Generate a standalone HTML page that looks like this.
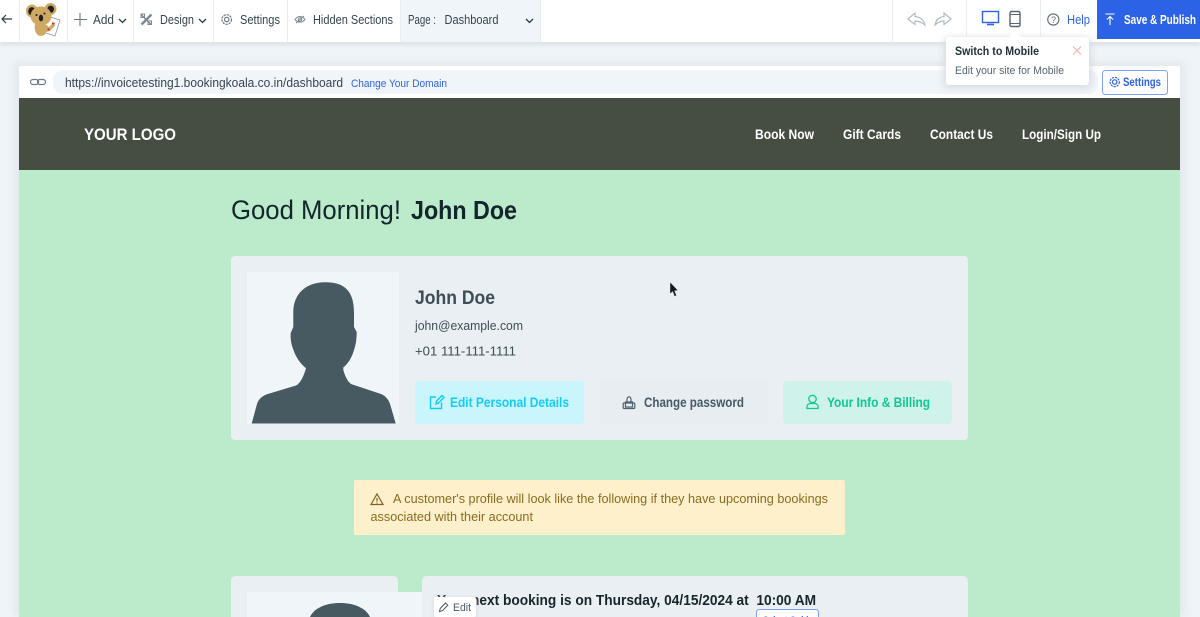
<!DOCTYPE html>
<html><head><meta charset="utf-8"><title>Editor</title>
<style>
html,body{margin:0;padding:0;width:1200px;height:617px;overflow:hidden;background:#eff4f8}
svg{display:block}
text{font-family:"Liberation Sans",sans-serif;white-space:pre}
</style></head><body>
<svg width="1200" height="617" viewBox="0 0 1200 617" xmlns="http://www.w3.org/2000/svg">
<defs>
<filter id="sh" x="-20%" y="-40%" width="140%" height="180%"><feGaussianBlur stdDeviation="4"/></filter>
<filter id="sh2" x="-20%" y="-40%" width="140%" height="200%"><feGaussianBlur stdDeviation="2"/></filter>
</defs>
<rect width="1200" height="617" fill="#eff4f8"/>
<!-- site frame -->
<rect x="14" y="62" width="1171" height="555" fill="#e3e8ec" filter="url(#sh)"/>
<rect x="19" y="66" width="1161" height="32" fill="#fff" rx="2"/>
<rect x="53" y="70" width="1045" height="24" rx="10" fill="#f0f5f9"/>
<g fill="none" stroke="#6c7a82" stroke-width="1.2"><rect x="30.5" y="79.5" width="8" height="5" rx="2.5"/><rect x="37.5" y="79.5" width="8" height="5" rx="2.5"/></g>
<text x="65" y="87" font-size="13" fill="#36454d" textLength="278" lengthAdjust="spacingAndGlyphs">https://invoicetesting1.bookingkoala.co.in/dashboard</text>
<text x="351" y="87" font-size="11" fill="#2f62e8" textLength="96" lengthAdjust="spacingAndGlyphs">Change Your Domain</text>
<rect x="1102.5" y="70.5" width="65" height="24" rx="3" fill="#fff" stroke="#7fa3f2"/>
<g fill="none" stroke="#2f62e8" stroke-width="1.2"><circle cx="1114.7" cy="82" r="2.2"/><circle cx="1114.7" cy="82" r="4.6" stroke-dasharray="2.2 .9"/></g>
<text x="1123" y="86" font-size="11.5" font-weight="700" fill="#2f62e8" textLength="38" lengthAdjust="spacingAndGlyphs">Settings</text>
<!-- header -->
<rect x="19" y="98" width="1161" height="72" fill="#464e41"/>
<text x="84" y="140" font-size="17" font-weight="700" fill="#fff" textLength="92" lengthAdjust="spacingAndGlyphs">YOUR LOGO</text>
<g font-size="13.5" font-weight="700" fill="#fff">
<text x="755" y="139" textLength="59" lengthAdjust="spacingAndGlyphs">Book Now</text>
<text x="843" y="139" textLength="58" lengthAdjust="spacingAndGlyphs">Gift Cards</text>
<text x="930" y="139" textLength="63" lengthAdjust="spacingAndGlyphs">Contact Us</text>
<text x="1022" y="139" textLength="79" lengthAdjust="spacingAndGlyphs">Login/Sign Up</text>
</g>
<!-- page -->
<rect x="19" y="170" width="1161" height="447" fill="#bbebca"/>
<text x="231" y="219" font-size="27" fill="#12262c" textLength="170" lengthAdjust="spacingAndGlyphs">Good Morning!</text>
<text x="411" y="219" font-size="26" font-weight="700" fill="#12262c" textLength="106" lengthAdjust="spacingAndGlyphs">John Doe</text>
<!-- profile card -->
<rect x="231" y="256" width="737" height="184" rx="4" fill="#e9eff3"/>
<rect x="247" y="272" width="152" height="152" fill="#f0f5f9"/>
<path d="M325 282.3C339 282.3 345 286.500 349 292C353 298 354 305 354 315L354 327L356.700 332C356.700 340 355.500 346 354 350C352 357 348 364 343.300 367.500L343.300 370C345 376 348 382.500 351.700 384.300L381 394C386 396 389 400 390.500 405.500L395.700 423.500L251.700 423.500L257 404C258.500 399.500 262 396 267 394.300L296 385.500C301 383 304 375 306 368.300C301 364 296 358 293.500 350C291.500 345 290.300 340 290.700 333L293.300 327L293.300 312C293.300 295 305 282.300 325 282.300Z" fill="#475961"/>
<text x="415" y="304" font-size="19" font-weight="700" fill="#3d4e56" textLength="80" lengthAdjust="spacingAndGlyphs">John Doe</text>
<text x="415" y="330" font-size="13" fill="#3d4e56" textLength="108" lengthAdjust="spacingAndGlyphs">john@example.com</text>
<text x="415" y="355.500" font-size="13" fill="#3d4e56" textLength="101" lengthAdjust="spacingAndGlyphs">+01 111-111-1111</text>
<rect x="415" y="381" width="169" height="43" rx="4" fill="#c9f5fd"/>
<rect x="600" y="381" width="168" height="43" rx="4" fill="#e8edf1"/>
<rect x="783" y="381" width="169" height="43" rx="4" fill="#cff3ea"/>
<g fill="none" stroke="#12cdf7" stroke-width="1.4"><path d="M436 397H430.500V408.500H441.500V402.500"/><path d="M436 404L436.500 401L442 395.500L444 397.500L438.500 403Z"/></g>
<text x="450" y="407" font-size="13.500" font-weight="700" fill="#12cdf7" textLength="119" lengthAdjust="spacingAndGlyphs">Edit Personal Details</text>
<g fill="none" stroke="#51626b" stroke-width="1.200"><rect x="625.500" y="402" width="7" height="5"/><path d="M627 402V399.500C627 396 631 396 631 399.500V402"/><rect x="623.200" y="403" width="11.600" height="5.500" rx="1"/></g>
<text x="644" y="407" font-size="13.500" font-weight="700" fill="#455a64" textLength="100" lengthAdjust="spacingAndGlyphs">Change password</text>
<g fill="none" stroke="#0fc896" stroke-width="1.300"><circle cx="812.500" cy="399" r="3.700"/><path d="M807 408.500V406.500C807 404.500 809 403.500 810.500 403.500H814.500C816 403.500 818 404.500 818 406.500V408.500Z"/></g>
<text x="827" y="407" font-size="13.500" font-weight="700" fill="#0fc896" textLength="103" lengthAdjust="spacingAndGlyphs">Your Info &amp; Billing</text>
<!-- cursor -->
<path d="M670 282L670 294L672.700 291.500L674.500 296.500L676.500 295.500L674.600 290.800L678 290.500Z" fill="#10181c" stroke="#e3e8ec" stroke-width=".5"/>
<!-- alert -->
<rect x="354" y="480" width="491" height="55" rx="2" fill="#fdf0cb"/>
<g fill="none" stroke="#7d6420" stroke-width="1.200"><path d="M377 494L383 504.500H371Z"/><path d="M377 498V501.500M377 502.500V503.500"/></g>
<text x="393" y="503" font-size="13" fill="#8a6d22" textLength="435" lengthAdjust="spacingAndGlyphs">A customer's profile will look like the following if they have upcoming bookings</text>
<text x="370.500" y="521" font-size="13" fill="#8a6d22" textLength="162.500" lengthAdjust="spacingAndGlyphs">associated with their account</text>
<!-- lower cards -->
<path d="M231 617V581Q231 576 236 576H393Q398 576 398 581V617Z" fill="#e9eff3"/>
<path d="M422 617V581Q422 576 427 576H963Q968 576 968 581V617Z" fill="#e9eff3"/>
<rect x="247" y="592" width="175" height="25" fill="#f0f5f9"/>
<path d="M310 617C314 608 326 603 340 603C354 603 366 608 370 617Z" fill="#475961"/>
<text x="437" y="605" font-size="14.500" font-weight="700" fill="#17252c" textLength="379" lengthAdjust="spacingAndGlyphs">Your next booking is on Thursday, 04/15/2024 at  10:00 AM</text>
<rect x="756.500" y="609.500" width="62" height="7.500" fill="#fff"/>
<path d="M756.500 617V612.500Q756.500 609.500 759.500 609.500H815.500Q818.500 609.500 818.500 612.500V617" fill="none" stroke="#7fa3f2"/>
<text x="763" y="623.500" font-size="10" font-weight="700" fill="#2f62e8" textLength="50" lengthAdjust="spacingAndGlyphs">Select Guide</text>
<rect x="434" y="598" width="42" height="19" rx="2" fill="#cfd6da" filter="url(#sh2)"/>
<rect x="434" y="597" width="42" height="20" rx="2" fill="#fff"/>
<path d="M439.500 611.500L440.200 608.500L445.500 603L447.800 605.200L442.400 610.700Z" fill="none" stroke="#4a5a63" stroke-width="1"/>
<text x="453" y="611" font-size="11" fill="#4a5a63" textLength="18" lengthAdjust="spacingAndGlyphs">Edit</text>
<!-- toolbar -->
<rect x="0" y="40" width="1200" height="5" fill="#d9dfe3" filter="url(#sh2)"/>
<rect width="1200" height="42" fill="#fff"/>
<rect x="400" y="0" width="140" height="42" fill="#f0f5f9"/>
<g fill="#e9eef1">
<rect x="19" width="1" height="42"/><rect x="67" width="1" height="42"/><rect x="133" width="1" height="42"/><rect x="213" width="1" height="42"/><rect x="287" width="1" height="42"/><rect x="400" width="1" height="42"/><rect x="540" width="1" height="42"/><rect x="892" width="1" height="42"/><rect x="966" width="1" height="42"/><rect x="1040" width="1" height="42"/>
</g>
<path d="M12 19H2M6 15L2 19L6 23" fill="none" stroke="#2b3a42" stroke-width="1.200"/>
<!-- koala -->
<g>
<path d="M47 16L60 20L55 36L43 32Z" fill="#fff" stroke="#8a8f92" stroke-width=".7"/>
<ellipse cx="32" cy="11" rx="6" ry="6.500" fill="#cfa862"/><ellipse cx="50.500" cy="9" rx="6" ry="6" fill="#cfa862"/>
<ellipse cx="31.800" cy="11.300" rx="3.600" ry="4.200" fill="#22201c"/><ellipse cx="50.700" cy="9.300" rx="3.300" ry="3.700" fill="#22201c"/>
<ellipse cx="41" cy="16" rx="10.500" ry="9.500" fill="#cfa862"/>
<path d="M35 24C38 22 45 23 49 27L53 23.500L55 25.500L50 31L46 32C46 35 42 36.500 38.500 35.500C35 33 34 28 35 24Z" fill="#cfa862"/>
<ellipse cx="41" cy="18" rx="2.200" ry="3.400" fill="#24211c"/>
<circle cx="36.500" cy="15" r="1" fill="#24211c"/><circle cx="44.500" cy="13.500" r="1" fill="#24211c"/>
<rect x="52" y="22.500" width="2.500" height="2" fill="#c8382c"/><rect x="47.500" y="28.500" width="2" height="2" fill="#c8382c"/>
</g>
<!-- toolbar items -->
<path d="M80 13V26M74 19.500H87" stroke="#6b7a82" stroke-width="1.100" fill="none"/>
<g font-size="12.500" fill="#36454d">
<text x="93" y="24" textLength="21" lengthAdjust="spacingAndGlyphs">Add</text>
<text x="160" y="24" textLength="34" lengthAdjust="spacingAndGlyphs">Design</text>
<text x="240" y="24" textLength="40" lengthAdjust="spacingAndGlyphs">Settings</text>
<text x="313" y="24" textLength="80" lengthAdjust="spacingAndGlyphs">Hidden Sections</text>
<text x="408" y="24" textLength="28" lengthAdjust="spacingAndGlyphs">Page :</text>
<text x="444.500" y="24" textLength="54" lengthAdjust="spacingAndGlyphs">Dashboard</text>
</g>
<g fill="none" stroke="#2b3a42" stroke-width="1.300"><path d="M119 19L122.500 22.500L126 19"/><path d="M199 19L202.500 22.500L206 19"/><path d="M526 19L529.500 22.500L533 19"/></g>
<g fill="none" stroke="#7a888f" stroke-width="1.500"><path d="M141.500 15L151 24.500"/><path d="M141.500 24.500L151.500 14.500" stroke-width="2.400"/><rect x="141" y="14" width="3.500" height="3.500" stroke-width="1"/><rect x="148" y="21" width="3.500" height="3.500" stroke-width="1"/></g>
<g fill="none" stroke="#6b7a82" stroke-width="1.200"><circle cx="226.700" cy="19.500" r="2.200"/><circle cx="226.700" cy="19.500" r="4.800" stroke-dasharray="2.300 .9"/></g>
<g fill="none" stroke="#7c8a91" stroke-width="1"><path d="M295 19.500C298 15.500 302 15.500 305 19.500C302 23 298 23 295 19.500Z"/><circle cx="300" cy="19.500" r="1.700"/><path d="M296 23L304 16"/></g>
<!-- undo / redo -->
<g fill="none" stroke="#b3bcc2" stroke-width="1.200"><path d="M915 13L908 19L915 24.500V21C919 21 922 22.500 925 25C924 20 920 17 915 16.500Z"/><path d="M944 13L951 19L944 24.500V21C940 21 938 22.500 935 25C936 20 939 17 944 16.500Z"/></g>
<!-- device -->
<g fill="none"><rect x="982.500" y="11.500" width="16" height="11" stroke="#2f62e8" stroke-width="1.400"/><path d="M987 24.500H994" stroke="#2f62e8" stroke-width="1.600"/><rect x="1010" y="11.500" width="10" height="15" rx="1.500" stroke="#55666f" stroke-width="1.400"/><path d="M1010 14.500H1020M1010 23.500H1020" stroke="#55666f" stroke-width="1"/></g>
<circle cx="1053.300" cy="19.500" r="5.600" fill="none" stroke="#5b6b73" stroke-width="1.100"/>
<text x="1051" y="22.800" font-size="9" fill="#5b6b73">?</text>
<text x="1067" y="24" font-size="12.500" fill="#2f62e8" textLength="23" lengthAdjust="spacingAndGlyphs">Help</text>
<rect x="1097" y="0" width="103" height="39" fill="#2c62e6"/>
<path d="M1105.500 14H1114.500M1110 25V17M1107 19.500L1110 16.500L1113 19.500" fill="none" stroke="#fff" stroke-width="1.100"/>
<text x="1124" y="24" font-size="12.500" font-weight="700" fill="#fff" textLength="72" lengthAdjust="spacingAndGlyphs">Save &amp; Publish</text>
<!-- popup -->
<rect x="944" y="38" width="147" height="50" rx="4" fill="#d5dbdf" filter="url(#sh)"/>
<path d="M1009 37L1015 31L1021 37Z" fill="#fff"/>
<rect x="946" y="37" width="143" height="48" rx="3" fill="#fff"/>
<text x="955" y="55" font-size="12" font-weight="700" fill="#1f2e35" textLength="84" lengthAdjust="spacingAndGlyphs">Switch to Mobile</text>
<text x="955" y="74" font-size="11" fill="#55666f" textLength="109" lengthAdjust="spacingAndGlyphs">Edit your site for Mobile</text>
<path d="M1073 46.500L1081 54.500M1081 46.500L1073 54.500" stroke="#eab3ab" stroke-width="1.100" fill="none"/>
</svg>
</body></html>
